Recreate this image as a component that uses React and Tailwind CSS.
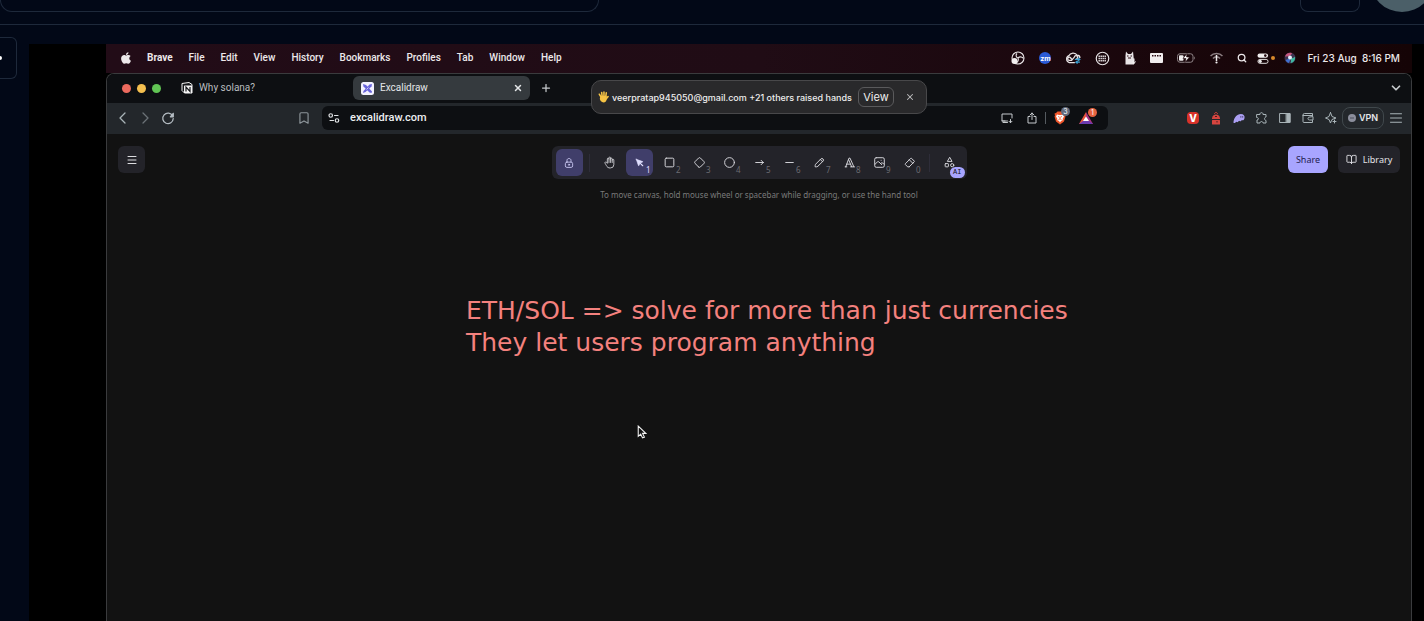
import React from "react";
import { BookOpen, Bookmark, ChevronDown, Menu, Plus, Search, X } from "lucide-react";
import { FaApple } from "react-icons/fa";

const MENUS = ["File", "Edit", "View", "History", "Bookmarks", "Profiles", "Tab", "Window", "Help"];

function Svg({ box = 24, stroke = 2, className, children }) {
  return (
    <svg
      viewBox={`0 0 ${box} ${box}`}
      fill="none"
      stroke="currentColor"
      strokeWidth={stroke}
      strokeLinecap="round"
      strokeLinejoin="round"
      className={className}
      aria-hidden="true"
    >
      {children}
    </svg>
  );
}

/* ---------- menu bar status icons ---------- */

function ObsIcon() {
  return (
    <svg viewBox="0 0 28 28" className="h-3.5 w-3.5" fill="none" stroke="#e8e4e6" strokeWidth="2.2" aria-hidden="true">
      <circle cx="14" cy="14" r="12" />
      <path d="M14 14C10 13 9 8 12 5M14 14c4-4 9-2 11 1M14 14c2 5-1 9-5 10" />
      <circle cx="7" cy="20" r="6" fill="#f3f0f1" stroke="none" />
    </svg>
  );
}

function CloudIcon() {
  return (
    <svg viewBox="0 0 34 26" className="h-3 w-4" fill="none" stroke="#e8e4e6" strokeWidth="2.8" aria-hidden="true">
      <path d="M21 23H9a8 8 0 0 1-1-15C11 1 22 0 26 7c4 0 6 3 6 6" />
      <path d="M16 17l-4-4a3.500 3.500 0 1 0-2 5h4l6-7a3.500 3.500 0 1 1 4 4" />
      <path d="M21 16h10M24 22h8M28 12l4 4-4 3M27 19l-4 3 4 3" stroke="#3a9fd0" strokeWidth="2.400" />
    </svg>
  );
}

function GridCircleIcon() {
  return (
    <svg viewBox="0 0 30 30" className="h-[15px] w-[15px]" aria-hidden="true">
      <circle cx="15" cy="15" r="12.500" fill="none" stroke="#e8e4e6" strokeWidth="2.400" />
      <path d="M7 10.500h16M7 15h16M7 19.500h16" stroke="#e8e4e6" strokeWidth="2.600" strokeDasharray="2.800 1.200" />
    </svg>
  );
}

function CatIcon() {
  return (
    <svg viewBox="0 0 24 28" className="h-[14px] w-3" aria-hidden="true">
      <path d="M3 27V9L4 1l4 5h6l4-5 1 9c0 4 1 5 1 8v9z" fill="#e8e4e6" />
      <path d="M6 10h3M13 10h3M8 14h6" stroke="#2a0c14" strokeWidth="2" />
      <path d="M20 15v10M17 21l3 4 3-4" stroke="#f5f2f3" strokeWidth="2" fill="none" />
    </svg>
  );
}

function CalendarIcon() {
  return (
    <svg viewBox="0 0 26 20" className="h-2.5 w-[13px]" aria-hidden="true">
      <rect width="26" height="20" rx="2" fill="#f0edee" />
      <path d="M4 5.500h3M9 5.500h3M14 5.500h3M19 5.500h3" stroke="#2a0c14" strokeWidth="3" />
    </svg>
  );
}

function BatteryIcon() {
  return (
    <svg viewBox="0 0 38 20" className="h-2.5 w-[19px]" aria-hidden="true">
      <rect x="1" y="1.500" width="31" height="17" rx="5" fill="none" stroke="#8f8488" strokeWidth="2" />
      <rect x="4" y="4.500" width="9" height="11" rx="2" fill="#f0edee" />
      <path d="M34.500 7v6c2-1 2-5 0-6z" fill="#8f8488" />
      <path d="M20 1l-8 10h6l-2 8 9-11h-6z" fill="#ffffff" stroke="#22070d" strokeWidth="1.200" />
    </svg>
  );
}

function WifiIcon() {
  return (
    <svg viewBox="0 0 26 24" className="h-3 w-[13px]" fill="none" strokeWidth="3" aria-hidden="true">
      <path d="M1 8c6-7 18-7 24 0M6 13c4-5 10-5 14 0" stroke="#8d8084" />
      <path d="M13 6v12" stroke="#f0edee" strokeWidth="3" />
      <circle cx="13" cy="21" r="2.200" fill="#f0edee" />
    </svg>
  );
}

function ControlCenterIcon() {
  return (
    <svg viewBox="0 0 26 24" className="h-[11px] w-3" aria-hidden="true">
      <rect x="1" y="1" width="23" height="9.500" rx="4.700" fill="#f0edee" />
      <circle cx="18" cy="5.700" r="2.800" fill="#22070d" />
      <rect x="2" y="14" width="22" height="8.500" rx="4.200" fill="none" stroke="#f0edee" strokeWidth="2" />
      <circle cx="7" cy="18.200" r="3.400" fill="#f0edee" />
    </svg>
  );
}

function SiriIcon() {
  return (
    <svg viewBox="0 0 24 24" className="h-3 w-3" aria-hidden="true">
      <circle cx="12" cy="12" r="11" fill="#3b3350" />
      <path d="M2 9a11 11 0 0 1 14-7c-1 5-7 8-14 7z" fill="#c6557c" />
      <path d="M3 16c4-1 8-3 9-4 1 4-1 9-3 10a11 11 0 0 1-6-6z" fill="#3f6fd0" />
      <path d="M12 12c4 1 8 0 10-3 1 6-2 12-9 13 2-3 1-7-1-10z" fill="#3fb7a0" />
      <circle cx="12" cy="11" r="4" fill="#e8eefa" />
    </svg>
  );
}

/* ---------- browser icons ---------- */

function NotionIcon() {
  return (
    <svg viewBox="0 0 24 24" className="h-3 w-3" aria-hidden="true">
      <path d="M2 3l14-2 6 4v17H7l-5-5z" fill="#15171a" stroke="#f4f4f4" strokeWidth="2" />
      <rect x="6" y="7" width="16" height="15" rx="1" fill="#f4f4f4" />
      <path d="M10 19v-9l8 9v-9" fill="none" stroke="#15171a" strokeWidth="2.400" />
    </svg>
  );
}

function ExcalidrawIcon() {
  return (
    <svg viewBox="0 0 26 26" className="h-[13px] w-[13px]" aria-hidden="true">
      <rect width="26" height="26" rx="5" fill="#f3f2ff" />
      <path d="M4 4l6 2 12 13-1 3-4-1L5 9z" fill="#6965db" />
      <path d="M22 4l-5 1L5 18l-1 4 5-2L21 9z" fill="#6965db" />
      <path d="M11 15l4-4" stroke="#f3f2ff" strokeWidth="1.500" />
    </svg>
  );
}

function HistoryArrow({ d }) {
  return (
    <svg viewBox="0 0 12 14" className="h-3.5 w-3" fill="none" stroke="currentColor" strokeWidth="1.300" strokeLinecap="round" strokeLinejoin="round" aria-hidden="true">
      <path d={d} />
    </svg>
  );
}

function ReloadIcon() {
  return (
    <Svg stroke={2.2} className="h-3.5 w-3.5 text-[#b4bcc2]">
      <path d="M20 8.500A9 9 0 1 0 21 13" />
      <path d="M21 4v6h-5z" fill="currentColor" />
    </Svg>
  );
}

function SiteSettingsIcon() {
  return (
    <Svg className="h-3 w-3 text-[#dfe2e4]" stroke={2.4}>
      <circle cx="5.500" cy="7" r="3.500" />
      <path d="M13 7h7M4 17h7" />
      <circle cx="18" cy="17" r="3.500" />
    </Svg>
  );
}

function InstallIcon() {
  return (
    <Svg className="h-3 w-3 text-[#c5c9cc]">
      <path d="M22 12V4H2v14h11M2 18h6M4 21h9" />
      <path d="M19 15v6M16 18.500l3 3 3-3" />
    </Svg>
  );
}

function ShareUpIcon() {
  return (
    <Svg className="h-3.5 w-3 text-[#c5c9cc]">
      <path d="M8 9H4v13h16V9h-4M12 15V2M8 6l4-4 4 4" />
    </Svg>
  );
}

function BraveLion() {
  return (
    <svg viewBox="0 0 24 28" className="h-3.5 w-3" aria-hidden="true">
      <path d="M7 1h10l3 3 3 1-1 4 1 2-3 10-8 6-8-6L1 11l1-2-1-4 3-1z" fill="#f0562b" />
      <path d="M6 7l4 1h4l4-1 2 4-3 5 1 2-4 2-2 3-2-3-4-2 1-2-3-5z" fill="#fff" />
      <path d="M8 11l3 1M16 11l-3 1M12 12v4M9 17l3-1 3 1" stroke="#f0562b" strokeWidth="1.500" fill="none" />
    </svg>
  );
}

function BatTriangle() {
  return (
    <svg viewBox="0 0 28 24" className="h-3 w-3.5" aria-hidden="true">
      <path d="M14 0L0 24h14V12z" fill="#e5533c" />
      <path d="M14 0l14 24H14V12z" fill="#a8327e" />
      <path d="M0 24h28l-8-6H8z" fill="#6a3bb0" />
      <path d="M14 9l6 9H8z" fill="#fff" />
    </svg>
  );
}

function RedBackpack() {
  return (
    <svg viewBox="0 0 24 26" className="h-[13px] w-3" aria-hidden="true">
      <path d="M9 4c0-4 6-4 6 0" fill="none" stroke="#d6453f" strokeWidth="2" />
      <path d="M4 13c0-11 16-11 16 0v1H4z" fill="#d6453f" />
      <rect x="4" y="16" width="16" height="9" rx="1" fill="#d6453f" />
      <path d="M10 9h4M14 18v3" stroke="#4b1c20" strokeWidth="2" />
    </svg>
  );
}

function PhantomIcon() {
  return (
    <svg viewBox="0 0 26 22" className="h-[11px] w-3" aria-hidden="true">
      <path d="M1 19C2 9 8 1 17 1c6 0 9 4 8 9s-4 6-6 4c-1 3-4 4-6 2-2 3-4 4-6 2-2 3-6 4-6 1z" fill="#ab9ff2" />
      <path d="M17 6v3M21 6v3" stroke="#3c315b" strokeWidth="2" />
    </svg>
  );
}

function PuzzleIcon() {
  return (
    <Svg className="h-3 w-3">
      <path d="M2 5h6c-1-5 7-5 6 0h6v5c-4 1-4 6 0 7v5h-6c0-4-6-4-6 0H2v-6c4 0 4-5 0-5z" />
    </Svg>
  );
}

function SidePanelIcon() {
  return (
    <Svg className="h-3 w-3">
      <rect x="2" y="3" width="20" height="18" />
      <path d="M15 3h7v18h-7z" fill="currentColor" />
    </Svg>
  );
}

function WalletIcon() {
  return (
    <Svg className="h-3 w-3">
      <path d="M21 8V3H5a3 3 0 0 0-3 3v13a2 2 0 0 0 2 2h17v-4M2 7h19" />
      <path d="M22 10v6h-7a3 3 0 0 1 0-6z" />
    </Svg>
  );
}

function SparkleIcon() {
  return (
    <Svg className="h-3 w-3">
      <path d="M11 1l3 8 8 3-8 3-1 3M11 1L8 9l-7 3 7 3 3 7 1-3" />
      <path d="M19 16v6M16 19h6" />
    </Svg>
  );
}

/* ---------- drawing tools ---------- */

const TOOLS = [
  {
    label: "Selection", num: "1", active: true, box: 24, stroke: 1.25,
    art: (
      <g fill="currentColor">
        <path d="M6 6l4.153 11.793a.365 .365 0 0 0 .331 .207a.366 .366 0 0 0 .332 -.207l2.184 -4.793l4.787 -1.994a.355 .355 0 0 0 .213 -.323a.355 .355 0 0 0 -.213 -.323l-11.787 -4.36z" />
        <path d="M13.500 13.500l4.500 4.500" strokeWidth="2" />
      </g>
    ),
  },
  { label: "Rectangle", num: "2", art: <rect x="4" y="4" width="16" height="16" rx="2" /> },
  {
    label: "Diamond", num: "3",
    art: <path d="M10.500 20.400l-6.900 -6.900c-.781 -.781 -.781 -2.219 0 -3l6.900 -6.900c.781 -.781 2.219 -.781 3 0l6.900 6.900c.781 .781 .781 2.219 0 3l-6.900 6.900c-.781 .781 -2.219 .781 -3 0z" />,
  },
  { label: "Ellipse", num: "4", art: <circle cx="12" cy="12" r="9" /> },
  { label: "Arrow", num: "5", art: <path d="M5 12h14M15 16l4-4M15 8l4 4" /> },
  { label: "Line", num: "6", box: 20, stroke: 1.5, art: <path d="M4.167 10h11.666" /> },
  {
    label: "Draw", num: "7", box: 20, stroke: 1.5,
    art: (
      <>
        <path d="m7.643 15.690 7.774-7.773a2.357 2.357 0 1 0-3.334-3.334L4.310 12.357a3.333 3.333 0 0 0-.977 2.357v1.953h1.953c.884 0 1.732-.352 2.357-.977Z" />
        <path d="m11.250 5.417 3.333 3.333" />
      </>
    ),
  },
  { label: "Text", num: "8", art: <path d="M4 20h3M14 20h7M6.900 15h6.900M10.200 6.300L16 20M5 20L11 4h2l7 16" /> },
  {
    label: "Insert image", num: "9", box: 20, stroke: 1.5,
    art: (
      <>
        <path d="M12.500 6.667h.01" />
        <rect x="2.625" y="2.625" width="14.750" height="14.750" rx="2.300" />
        <path d="m3.333 12.500 3.334-3.333c.773-.745 1.726-.745 2.500 0l4.166 4.166" />
        <path d="m11.667 11.667.833-.834c.774-.744 1.726-.744 2.500 0l1.667 1.667" />
      </>
    ),
  },
  {
    label: "Eraser", num: "0",
    art: (
      <>
        <path d="M11.500 20H8.500l-4.210-4.300a1 1 0 0 1 0-1.410l10-10a1 1 0 0 1 1.410 0l5 5a1 1 0 0 1 0 1.410l-9.200 9.300" />
        <path d="M18 13.300l-6.300-6.300" />
      </>
    ),
  },
];

function ToolButton({ label, num, active, box = 24, stroke = 1.8, children }) {
  return (
    <button
      type="button"
      aria-label={label}
      className={`relative flex h-[27px] w-[27px] items-center justify-center rounded-md ${active ? "bg-[#403e6a] text-[#e0dfff]" : "text-[#d5d5da]"}`}
    >
      <Svg box={box} stroke={stroke} className="h-[13px] w-[13px]">
        {children}
      </Svg>
      {num && (
        <span className={`absolute right-0.5 bottom-0.5 text-[8px] leading-[8px] ${active ? "text-[#e0dfff]" : "text-[#6c6c72]"}`}>
          {num}
        </span>
      )}
    </button>
  );
}

function Divider() {
  return <span className="mx-[3px] h-[18px] w-px bg-[#2e2d39]" />;
}

function MenuBar() {
  return (
    <div className="flex h-[29px] items-center bg-linear-to-r from-[#220c17] via-[#200c15] to-[#150406] pr-3 pb-px pl-[15px] text-[10px] leading-none font-medium text-[#ece8ea]">
      <nav className="flex items-center gap-4 font-[Roboto,sans-serif]">
        <FaApple className="h-3.5 w-2.5" aria-hidden="true" />
        <b className="font-bold">Brave</b>
        {MENUS.map((m) => (
          <span key={m}>{m}</span>
        ))}
      </nav>
      <div className="ml-auto flex items-center gap-[14px]">
        <ObsIcon />
        <span className="flex h-3 w-3 items-center justify-center rounded-full bg-[#2a5bd7] text-[7px] font-bold text-white">zm</span>
        <CloudIcon />
        <GridCircleIcon />
        <CatIcon />
        <CalendarIcon />
        <BatteryIcon />
        <WifiIcon />
        <Search className="h-2.5 w-2.5" strokeWidth={3} />
      </div>
      <div className="ml-2.5 flex items-center gap-0.5">
        <ControlCenterIcon />
        <span className="h-1 w-1 rounded-full bg-[#d98a2b]" />
      </div>
      <span className="ml-[9px]">
        <SiriIcon />
      </span>
      <time className="ml-[11px] whitespace-pre">Fri 23 Aug  8:16 PM</time>
    </div>
  );
}

function TabStrip() {
  return (
    <div className="flex h-[29px] items-center bg-[#0d0f12] pr-2 pb-px pl-[15px] font-[Roboto,sans-serif] text-[10px] leading-none">
      <div className="flex gap-1.5">
        <span className="h-[9px] w-[9px] rounded-full bg-[#ec6a5e]" />
        <span className="h-[9px] w-[9px] rounded-full bg-[#f4bf4f]" />
        <span className="h-[9px] w-[9px] rounded-full bg-[#61c554]" />
      </div>
      <div className="ml-5 flex w-[166px] items-center gap-1.5 text-[#b9bcbf]">
        <NotionIcon />
        <span>Why solana?</span>
      </div>
      <div className="ml-1.5 flex h-6 w-[177px] items-center gap-1.5 rounded-md bg-[#353a3e] pr-[7px] pl-2 text-[#e3e6e8]">
        <ExcalidrawIcon />
        <span>Excalidraw</span>
        <button type="button" aria-label="Close tab" className="ml-auto">
          <X className="h-2.5 w-2.5" strokeWidth={3.5} />
        </button>
      </div>
      <button type="button" aria-label="New tab" className="ml-2.5 text-[#c5c9cc]">
        <Plus className="h-3 w-3" strokeWidth={2.5} />
      </button>
      <button type="button" aria-label="Search tabs" className="ml-auto text-[#c5c9cc]">
        <ChevronDown className="h-3.5 w-3.5" strokeWidth={3} />
      </button>
    </div>
  );
}

function AddressRow() {
  return (
    <div className="flex h-[31px] items-center bg-[#23272b] pr-[9px] pb-px pl-2.5 text-[#a9b4b8]">
      <div className="flex items-center gap-2.5">
        <button type="button" aria-label="Back">
          <HistoryArrow d="M8 2L3 7l5 5" />
        </button>
        <button type="button" aria-label="Forward" className="text-[#6b7277]">
          <HistoryArrow d="M4 2l5 5-5 5" />
        </button>
        <button type="button" aria-label="Reload">
          <ReloadIcon />
        </button>
      </div>
      <button type="button" aria-label="Bookmark this page" className="ml-[122px] text-[#8d959a]">
        <Bookmark className="h-3.5 w-3.5" strokeWidth={2} />
      </button>
      <div className="ml-[11px] flex h-6 min-w-0 flex-1 items-center rounded-md bg-[#0d0f12] pr-[15px] pl-1.5">
        <SiteSettingsIcon />
        <input
          aria-label="Address"
          defaultValue="excalidraw.com"
          className="ml-2.5 min-w-0 flex-1 bg-transparent font-[Roboto,sans-serif] text-[11px] font-medium text-[#eceef0] outline-none"
        />
        <button type="button" aria-label="Install app">
          <InstallIcon />
        </button>
        <button type="button" aria-label="Share page" className="ml-[13px]">
          <ShareUpIcon />
        </button>
        <span className="ml-[7px] h-3 w-px bg-[#555b60]" />
        <button type="button" aria-label="Brave Shields" className="relative ml-2">
          <BraveLion />
          <span className="absolute -top-1 -right-1 flex h-[9px] w-[9px] items-center justify-center rounded-full bg-[#626a7c] text-[7px] leading-none text-white">3</span>
        </button>
        <button type="button" aria-label="Brave Rewards" className="relative ml-[13px]">
          <BatTriangle />
          <span className="absolute -top-1 -right-1 flex h-[9px] w-[9px] items-center justify-center rounded-full bg-[#e5623f] text-[7px] leading-none text-white">1</span>
        </button>
      </div>
      <div className="ml-[79px] flex items-center gap-[11px]">
        <span className="flex h-3 w-3 items-center justify-center rounded-sm bg-[#d8322a] text-[10px] leading-none font-extrabold text-white">V</span>
        <RedBackpack />
        <PhantomIcon />
        <PuzzleIcon />
        <SidePanelIcon />
        <WalletIcon />
        <SparkleIcon />
      </div>
      <button
        type="button"
        className="ml-[5px] flex h-[22px] w-[42px] items-center justify-center gap-[3px] rounded-lg border border-[#40484c] text-[9px] font-semibold text-[#e3e6e8]"
      >
        <svg viewBox="0 0 16 16" className="h-2 w-2" aria-hidden="true">
          <circle cx="8" cy="8" r="8" fill="#8b8e9c" />
          <path d="M4 8h8" stroke="#4b4f5c" strokeWidth="2" />
        </svg>
        VPN
      </button>
      <button type="button" aria-label="Browser menu" className="ml-1.5">
        <Svg className="h-3 w-3">
          <path d="M1 3.500h22M1 12h22M1 20.500h22" />
        </Svg>
      </button>
    </div>
  );
}

function RaisedHandToast() {
  return (
    <div className="absolute top-[7px] left-1/2 flex h-[34px] w-[336px] -translate-x-1/2 items-center rounded-[10px] border border-[#48484a] bg-[#29292b] pr-[11px] pl-1.5 text-[#eeeeee]">
      <svg viewBox="0 0 24 26" className="h-3 w-[11px]" aria-hidden="true">
        <path
          d="M6 12L3 7M9 11L8 3M13 11V2M17 12l1-8M18 17l4-5"
          stroke="#f6c344" strokeWidth="3.400" strokeLinecap="round"
        />
        <path d="M5 10h14v7c0 5-3 8-7 8s-8-4-8-8z" fill="#f6c344" />
      </svg>
      <p className="ml-[3px] text-[9px] leading-none font-medium whitespace-nowrap">veerpratap945050@gmail.com +21 others raised hands</p>
      <button type="button" className="ml-auto h-5 w-9 rounded-md border border-[#5a5a5c] text-[11px] leading-none">
        View
      </button>
      <button type="button" aria-label="Dismiss" className="ml-[11px] text-[#bdbdbf]">
        <X className="h-2.5 w-2.5" strokeWidth={2.5} />
      </button>
    </div>
  );
}

function Canvas() {
  return (
    <main className="relative flex-1 bg-[#121212] px-[11px] pt-3 font-['Noto_Sans',sans-serif]">
      <div className="grid grid-cols-[1fr_auto_1fr] items-start">
        <button
          type="button"
          aria-label="Main menu"
          className="flex h-[27px] w-[27px] items-center justify-center rounded-md bg-[#232329] text-[#dcdce0]"
        >
          <Menu className="h-3 w-3" strokeWidth={2} />
        </button>
        <div className="flex flex-col items-center">
          <div className="flex items-center gap-[3px] rounded-md bg-[#232329] px-1 py-[3px]">
            <button type="button" aria-label="Keep selected tool active" className="flex h-[27px] w-[27px] items-center justify-center rounded-md bg-[#403e6a] text-[#c9c7f2]">
              <Svg box={20} stroke={1.5} className="h-3 w-3">
                <rect x="3.958" y="8.542" width="12.084" height="8.750" rx="2.500" />
                <circle cx="10" cy="12.900" r="1.040" />
                <path d="M6.667 8.333V5.417C6.667 3.806 8.159 2.500 10 2.500c1.841 0 3.333 1.306 3.333 2.917v2.916" />
              </Svg>
            </button>
            <Divider />
            <ToolButton label="Hand" stroke={1.6}>
              <path d="M8 13v-7.500a1.500 1.500 0 0 1 3 0v6.500M11 5.500v-2a1.500 1.500 0 1 1 3 0v8.500M14 5.500a1.500 1.500 0 0 1 3 0v6.500" />
              <path d="M17 7.500a1.500 1.500 0 0 1 3 0v8.500a6 6 0 0 1-6 6h-2h.208a6 6 0 0 1-5.012-2.700a69.740 69.740 0 0 1-.196-.3c-.312-.479-1.407-2.388-3.286-5.728a1.500 1.500 0 0 1 .536-2.022a1.867 1.867 0 0 1 2.280 .28l1.470 1.470" />
            </ToolButton>
            {TOOLS.map(({ art, ...tool }) => (
              <ToolButton key={tool.label} {...tool}>
                {art}
              </ToolButton>
            ))}
            <Divider />
            <button type="button" aria-label="More tools" className="relative flex h-[27px] w-[27px] items-center justify-center text-[#d5d5da]">
              <Svg stroke={1.8} className="h-[13px] w-[13px]">
                <path d="M12 3l-4 7h8z" />
                <circle cx="17" cy="17" r="3" />
                <rect x="4" y="14" width="6" height="6" rx="1" />
              </Svg>
              <span className="absolute -right-0.5 -bottom-0.5 rounded-full bg-[#a8a5ff] px-[3px] font-['Liberation_Mono',monospace] text-[7px] leading-[11px] text-[#121212]">
                AI
              </span>
            </button>
          </div>
          <p className="mt-2.5 text-[8px] leading-3 whitespace-nowrap text-[#7a7a7a]">
            To move canvas, hold mouse wheel or spacebar while dragging, or use the hand tool
          </p>
        </div>
        <div className="flex justify-end gap-2.5 text-[9px]">
          <button type="button" className="h-[27px] w-10 rounded-md bg-[#a8a5ff] text-[#232150]">
            Share
          </button>
          <button type="button" className="flex h-[27px] w-[62px] items-center justify-center gap-1.5 rounded-md bg-[#232329] text-[#e3e3e8]">
            <BookOpen className="h-[11px] w-[11px]" strokeWidth={2} />
            Library
          </button>
        </div>
      </div>

      <p className="absolute top-[161px] left-[359px] font-[Virgil,Excalifont,'DejaVu_Sans',sans-serif] text-[25px] leading-8 whitespace-pre text-[#f4817e]">
        {"ETH/SOL => solve for more than just currencies\nThey let users program anything"}
      </p>

      <svg viewBox="0 0 18 26" className="absolute top-[291px] left-[530px] h-[14px] w-[10px]" aria-hidden="true">
        <path d="M2 2v19l4.500-4 3.500 7 3.500-1.500-3.500-7H16z" fill="#111" stroke="#f2f2f2" strokeWidth="2" />
      </svg>
    </main>
  );
}

export default function App() {
  return (
    <div className="flex min-h-screen flex-col overflow-hidden bg-[#020817] font-[Inter,sans-serif]">
      <header className="flex h-[25px] items-start overflow-hidden border-b border-[#1e293b]">
        <div className="h-3 w-[599px] rounded-b-xl border border-t-0 border-[#1e293b]" />
        <div className="ml-auto h-3 w-[60px] rounded-b-lg border border-t-0 border-[#1e293b]" />
        <div className="-mt-[52px] -mr-[10px] ml-2.5 h-16 w-16 shrink-0 rounded-full bg-[#4b5f68]" />
      </header>
      <div className="flex flex-1">
        <aside className="w-[29px] shrink-0 pt-3">
          <button
            type="button"
            aria-label="Expand sidebar"
            className="flex h-[42px] w-[17px] items-center rounded-r-md border border-l-0 border-[#1e293b]"
          >
            <span className="h-1 w-0.5 rounded-r-full bg-white" />
          </button>
        </aside>
        <div className="mt-[19px] flex min-w-0 flex-1 flex-col bg-black pr-3 pl-[77px]">
          <MenuBar />
          <div className="relative flex flex-1 flex-col">
            <div className="flex flex-1 flex-col overflow-hidden rounded-t-lg border border-b-0 border-[#3a3b3d]">
              <TabStrip />
              <AddressRow />
              <Canvas />
            </div>
            <RaisedHandToast />
          </div>
        </div>
      </div>
    </div>
  );
}
